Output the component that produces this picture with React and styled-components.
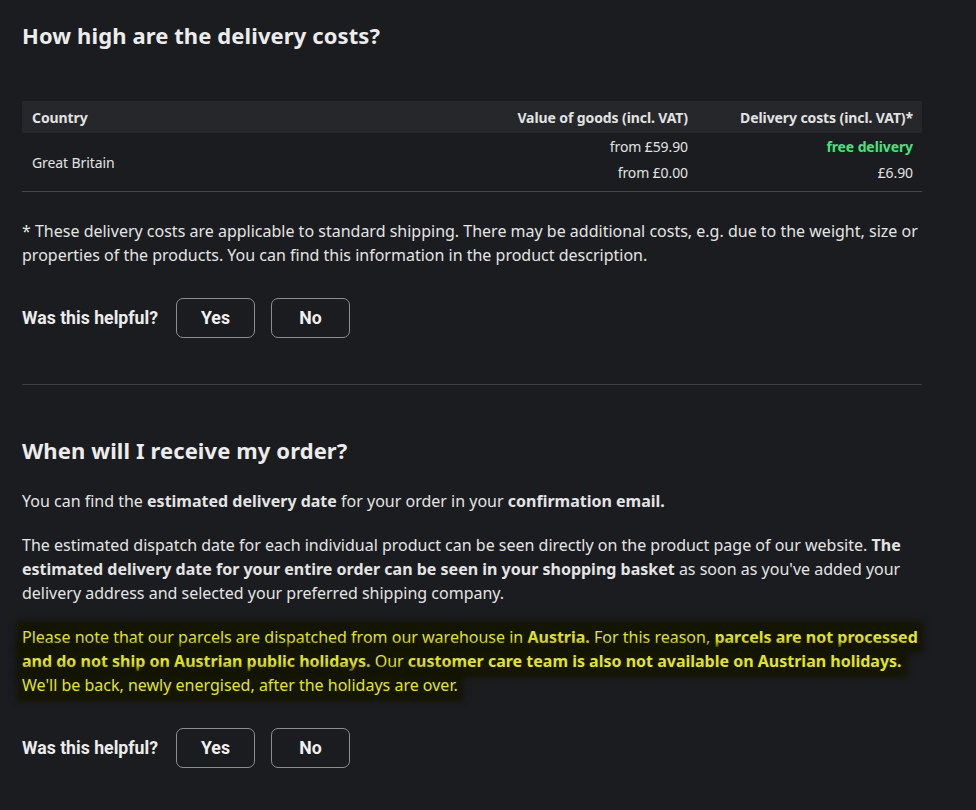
import React from "react";
import styled, { createGlobalStyle } from "styled-components";

const Global = createGlobalStyle`
  html, body { margin: 0; padding: 0; background: #1b1c1f; }
  body { font-family: "Noto Sans", "Open Sans", sans-serif; color: #e6e6e6; }
`;

const Page = styled.div`
  width: 900px;
  padding: 20px 22px 40px;
`;

const Heading = styled.h2`
  margin: 0;
  font-size: 22px;
  line-height: 30px;
  font-weight: 700;
  color: #ececec;
  letter-spacing: 0.1px;
`;

const Table = styled.div`
  margin-top: 51px;
  display: grid;
  grid-template-columns: 1fr auto 224px;
  font-size: 14px;
  letter-spacing: -0.1px;
  border-bottom: 1px solid #45464a;
`;

const HeadCell = styled.div`
  background: #26272a;
  height: 32px;
  display: flex;
  align-items: center;
  justify-content: ${(p) => (p.$right ? "flex-end" : "flex-start")};
  padding: ${(p) => (p.$last ? "0 9px 0 10px" : "0 10px")};
  font-weight: 700;
  color: #e2e2e2;
`;

const Cell = styled.div`
  display: flex;
  align-items: center;
  justify-content: ${(p) => (p.$right ? "flex-end" : "flex-start")};
  height: 26px;
  padding: ${(p) => (p.$last ? "0 9px 0 10px" : "0 10px")};
  margin-bottom: ${(p) => (p.$end ? "6px" : "0")};
  color: ${(p) => (p.$green ? "#46e27a" : "#e2e2e2")};
  font-weight: ${(p) => (p.$green ? 700 : 400)};
`;

const SpanCell = styled.div`
  grid-row: span 2;
  display: flex;
  align-items: center;
  padding: 0 10px;
  color: #e2e2e2;
`;

const Para = styled.p`
  margin: ${(p) => p.$mt || "20px"} 0 0;
  font-size: 16px;
  line-height: 24px;
  color: ${(p) => (p.$yellow ? "#e2e41c" : "#e4e4e4")};
  b { font-weight: 700; }
`;

const Mark = styled.span`
  background: #141500;
  box-shadow: 0 0 6px 5px #141500;
  -webkit-box-decoration-break: clone;
  box-decoration-break: clone;
`;

const Feedback = styled.div`
  display: flex;
  align-items: center;
  margin-top: ${(p) => p.$mt};
  font-family: Roboto, "Liberation Sans", sans-serif;
`;

const Label = styled.span`
  font-size: 17.7px;
  font-weight: 700;
  color: #ececec;
  margin-right: 18px;
`;

const Btn = styled.button`
  width: 79px;
  height: 40px;
  margin-right: 16px;
  background: transparent;
  border: 1px solid #8d8d8d;
  border-radius: 7px;
  color: #f0f0f0;
  font-family: Roboto, "Liberation Sans", sans-serif;
  font-weight: 700;
  font-size: 17.7px;
  cursor: pointer;
`;

const Divider = styled.hr`
  border: 0;
  border-top: 1px solid #3e3f43;
  margin: 46px 0 0;
`;

const Section2 = styled.div`
  margin-top: 50px;
`;

export default function App() {
  return (
    <>
      <Global />
      <Page>
        <Heading>How high are the delivery costs?</Heading>
        <Table>
          <HeadCell>Country</HeadCell>
          <HeadCell $right>Value of goods (incl. VAT)</HeadCell>
          <HeadCell $right $last>Delivery costs (incl. VAT)*</HeadCell>
          <SpanCell>Great Britain</SpanCell>
          <Cell $right>from £59.90</Cell>
          <Cell $right $last $green>free delivery</Cell>
          <Cell $right $end>from £0.00</Cell>
          <Cell $right $last $end>£6.90</Cell>
        </Table>
        <Para $mt="27px">
          * These delivery costs are applicable to standard shipping. There may be additional costs, e.g. due to the weight, size or properties of the products. You can find this information in the product description.
        </Para>
        <Feedback $mt="31px">
          <Label>Was this helpful?</Label>
          <Btn>Yes</Btn>
          <Btn>No</Btn>
        </Feedback>
        <Divider />
        <Section2>
          <Heading>When will I receive my order?</Heading>
          <Para $mt="24px">
            You can find the <b>estimated delivery date</b> for your order in your <b>confirmation email.</b>
          </Para>
          <Para>
            The estimated dispatch date for each individual product can be seen directly on the product page of our website. <b>The estimated delivery date for your entire order can be seen in your shopping basket</b> as soon as you've added your delivery address and selected your preferred shipping company.
          </Para>
          <Para $yellow>
            <Mark>
              Please note that our parcels are dispatched from our warehouse in <b>Austria.</b> For this reason, <b>parcels are not processed and do not ship on Austrian public holidays.</b> Our <b>customer care team is also not available on Austrian holidays.</b> We'll be back, newly energised, after the holidays are over.
            </Mark>
          </Para>
          <Feedback $mt="31px">
            <Label>Was this helpful?</Label>
            <Btn>Yes</Btn>
            <Btn>No</Btn>
          </Feedback>
        </Section2>
      </Page>
    </>
  );
}
